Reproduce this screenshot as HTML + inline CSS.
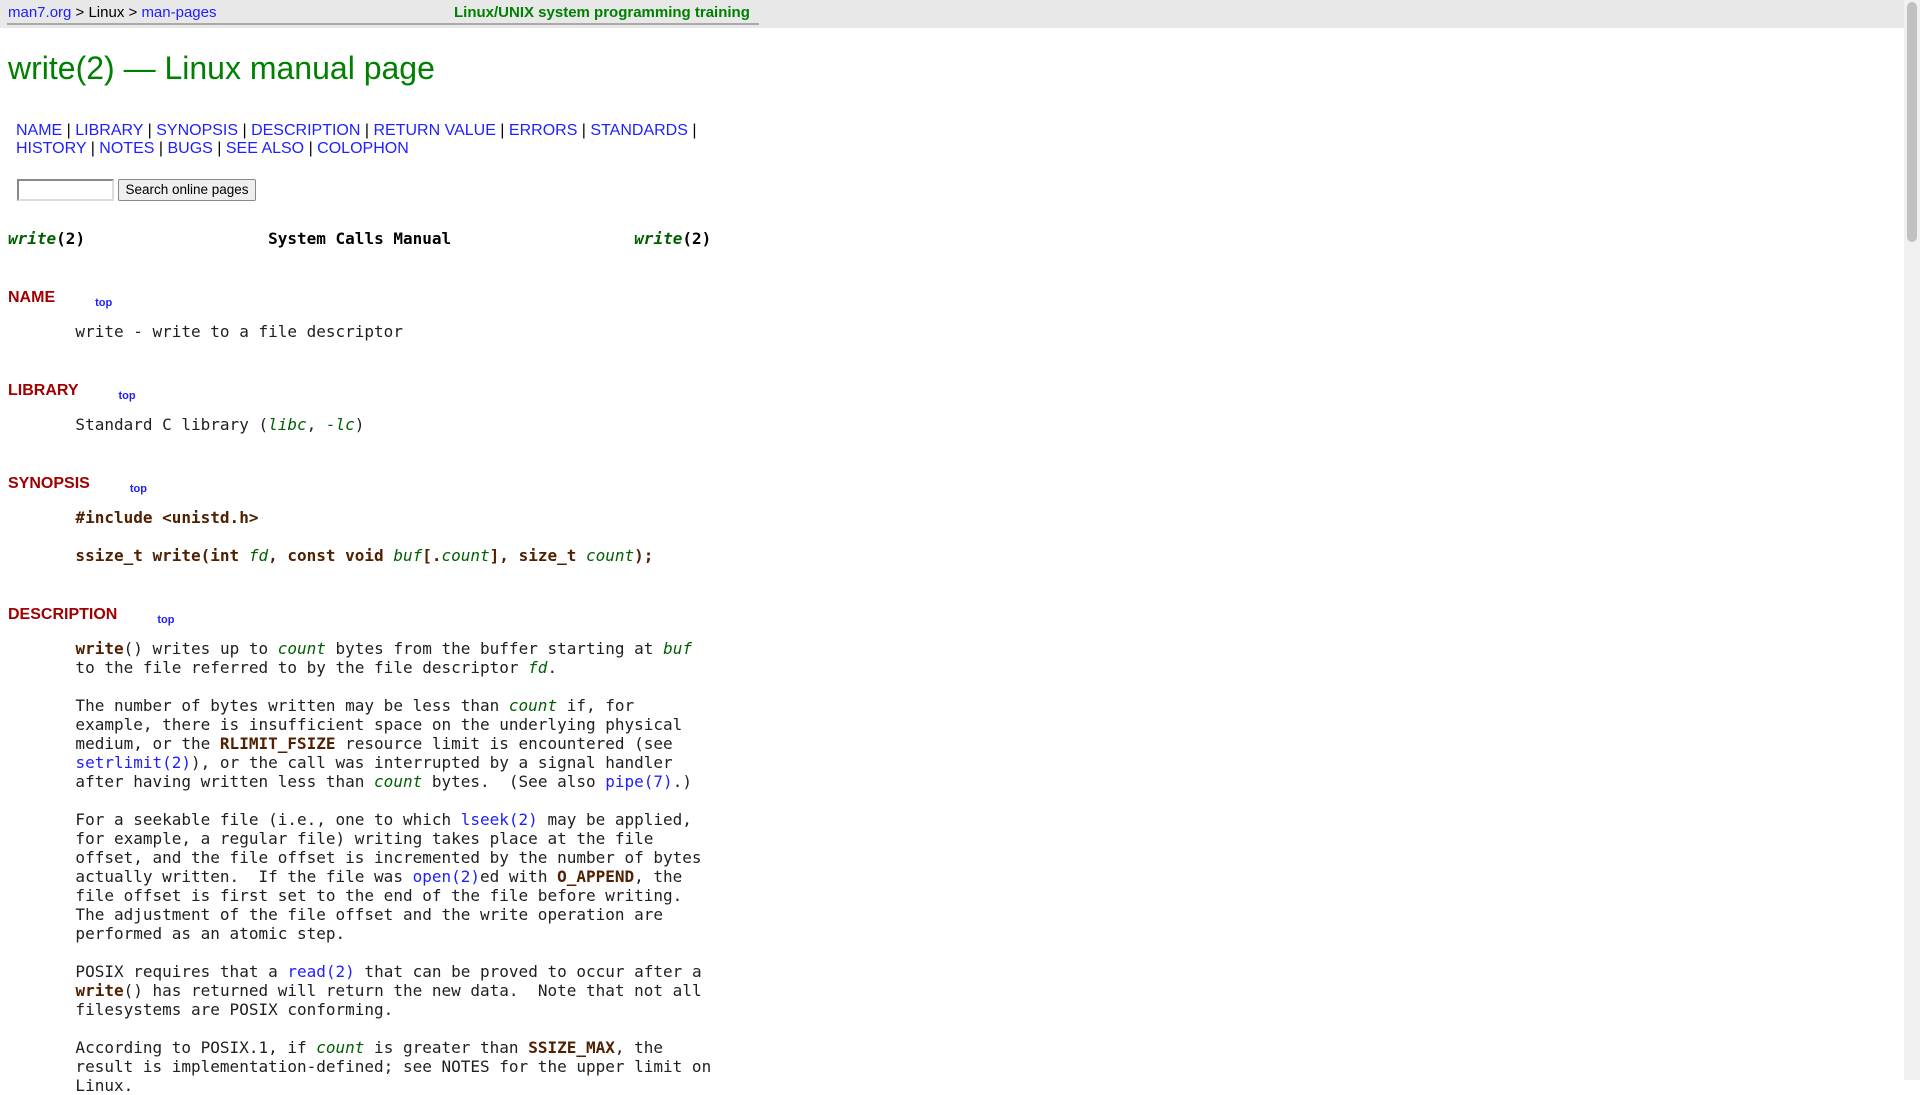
<!DOCTYPE html>
<html><head><meta charset="utf-8"><style>
html,body{margin:0;padding:0;width:1920px;height:1080px;overflow:hidden;background:#fff;font-family:"Liberation Sans",Arial,sans-serif;font-size:16px;color:#000}
a{color:#2020ff;text-decoration:none}
.abs{position:absolute;white-space:pre}
.bar{position:absolute;left:0;top:0;width:1904px;height:28px;background:#e8e8e8}
.bar .line{position:absolute;left:7px;top:23px;width:752px;height:2px;background:#aaa}
.mono{font-family:"DejaVu Sans Mono","Liberation Mono",monospace;font-size:16px;line-height:19px;color:#202020}
i{color:#006000}
b.m{color:#502000}
h2{position:absolute;margin:0;font-size:16px;font-weight:bold;color:#a00000;line-height:20px;left:8px}
.top{font-size:11px;font-weight:bold;margin-left:40px;vertical-align:-4px}
.sb{position:absolute;right:0;top:0;width:16px;height:1080px;background:#f1f1f1}
.sb div{position:absolute;left:3px;top:2px;width:10px;height:240px;background:#c1c1c1;border-radius:5px}
</style></head><body>
<div class="bar"><div class="line"></div>
<div class="abs" style="left:8px;top:4px;font-size:15px"><a href="#">man7.org</a> &gt; Linux &gt; <a href="#">man-pages</a></div>
<div class="abs" style="left:454px;top:4px;font-size:15px;font-weight:bold;color:#008000">Linux/UNIX system programming training</div>
</div>
<div class="abs" style="left:8px;top:49px;font-size:32px;color:#008000;line-height:38px">write(2) — Linux manual page</div>
<div class="abs" style="left:16px;top:122px;line-height:18px"><a href="#">NAME</a> | <a href="#">LIBRARY</a> | <a href="#">SYNOPSIS</a> | <a href="#">DESCRIPTION</a> | <a href="#">RETURN VALUE</a> | <a href="#">ERRORS</a> | <a href="#">STANDARDS</a> |
<a href="#">HISTORY</a> | <a href="#">NOTES</a> | <a href="#">BUGS</a> | <a href="#">SEE ALSO</a> | <a href="#">COLOPHON</a></div>
<div style="position:absolute;left:17px;top:179px;width:93px;height:18px;border:2px inset #ddd;background:#fff"></div>
<div style="position:absolute;left:118px;top:179px;width:136px;height:20px;border:1px solid #888;background:#efefef;font-size:13.5px;line-height:20px;text-align:center;border-radius:2px">Search online pages</div>
<div class="abs mono" style="left:8px;top:229px;color:#000"><b><i>write</i>(2)</b>                   <b>System Calls Manual</b>                   <b><i>write</i>(2)</b></div>
<h2 style="top:288px">NAME<a class="top" href="#">top</a></h2>
<div class="abs mono" style="left:8px;top:322px">       write - write to a file descriptor</div>
<h2 style="top:381px">LIBRARY<a class="top" href="#">top</a></h2>
<div class="abs mono" style="left:8px;top:415px">       Standard C library (<i>libc</i>, <i>-lc</i>)</div>
<h2 style="top:474px">SYNOPSIS<a class="top" href="#">top</a></h2>
<div class="abs mono" style="left:8px;top:508px"><b class="m">       #include &lt;unistd.h&gt;</b>

<b class="m">       ssize_t write(int </b><i>fd</i><b class="m">, const void </b><i>buf</i><b class="m">[.</b><i>count</i><b class="m">], size_t </b><i>count</i><b class="m">);</b></div>
<h2 style="top:605px">DESCRIPTION<a class="top" href="#">top</a></h2>
<div class="abs mono" style="left:8px;top:639px">       <b class="m">write</b>() writes up to <i>count</i> bytes from the buffer starting at <i>buf</i>
       to the file referred to by the file descriptor <i>fd</i>.

       The number of bytes written may be less than <i>count</i> if, for
       example, there is insufficient space on the underlying physical
       medium, or the <b class="m">RLIMIT_FSIZE</b> resource limit is encountered (see
       <a href="#">setrlimit(2)</a>), or the call was interrupted by a signal handler
       after having written less than <i>count</i> bytes.  (See also <a href="#">pipe(7)</a>.)

       For a seekable file (i.e., one to which <a href="#">lseek(2)</a> may be applied,
       for example, a regular file) writing takes place at the file
       offset, and the file offset is incremented by the number of bytes
       actually written.  If the file was <a href="#">open(2)</a>ed with <b class="m">O_APPEND</b>, the
       file offset is first set to the end of the file before writing.
       The adjustment of the file offset and the write operation are
       performed as an atomic step.

       POSIX requires that a <a href="#">read(2)</a> that can be proved to occur after a
       <b class="m">write</b>() has returned will return the new data.  Note that not all
       filesystems are POSIX conforming.

       According to POSIX.1, if <i>count</i> is greater than <b class="m">SSIZE_MAX</b>, the
       result is implementation-defined; see NOTES for the upper limit on
       Linux.</div>
<div class="sb"><div></div></div>
</body></html>
